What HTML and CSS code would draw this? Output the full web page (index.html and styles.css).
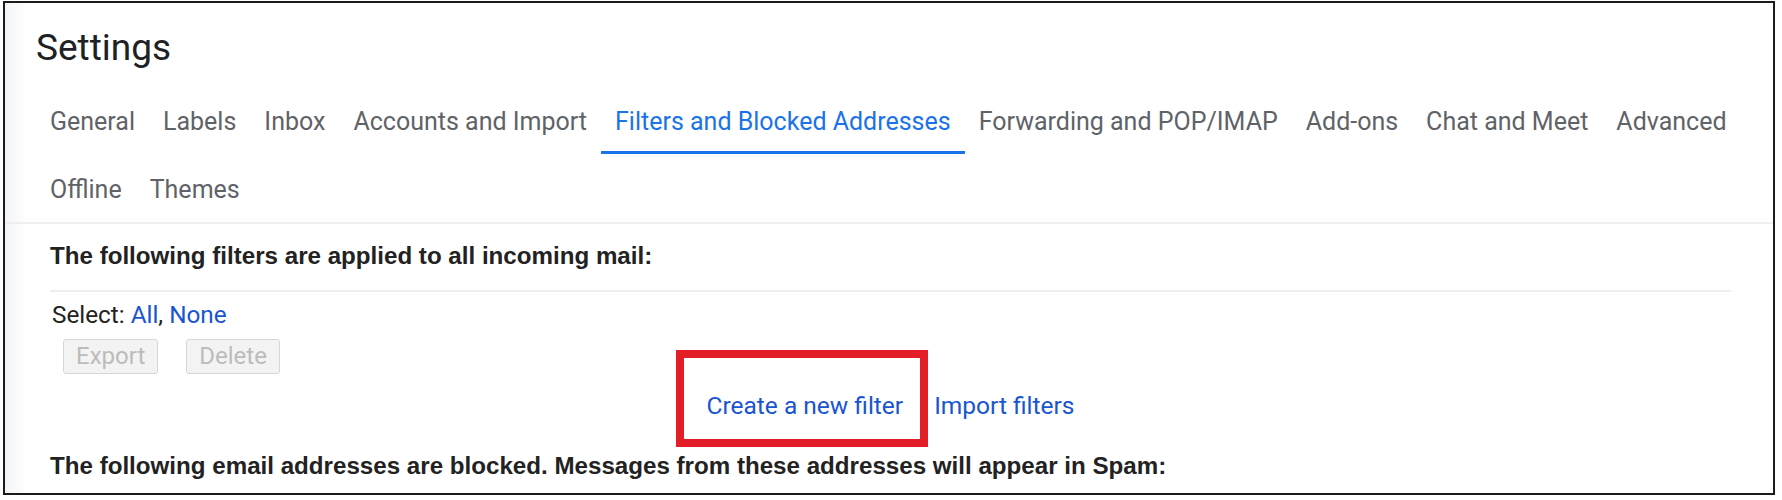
FILE: index.html
```html
<!DOCTYPE html>
<html lang="en">
<head>
<meta charset="utf-8">
<title>Settings - Filters and Blocked Addresses</title>
<link rel="stylesheet" href="styles.css">
</head>
<body>
<div class="frame">
  <h1 class="title">Settings</h1>
  <nav class="tabs">
    <a class="tab">General</a>
    <a class="tab">Labels</a>
    <a class="tab">Inbox</a>
    <a class="tab">Accounts and Import</a>
    <a class="tab active">Filters and Blocked Addresses</a>
    <a class="tab">Forwarding and POP/IMAP</a>
    <a class="tab">Add-ons</a>
    <a class="tab">Chat and Meet</a>
    <a class="tab">Advanced</a>
    <a class="tab">Offline</a>
    <a class="tab">Themes</a>
  </nav>
  <div class="content">
    <div class="section-head ruled">The following filters are applied to all incoming mail:</div>
    <div class="select-row">Select: <a class="link">All</a>, <a class="link">None</a></div>
    <div class="btn-row">
      <button class="btn" disabled>Export</button>
      <button class="btn" disabled>Delete</button>
    </div>
    <div class="links-row">
      <span class="highlight"><a class="link">Create a new filter</a></span>
      <a class="link">Import filters</a>
    </div>
    <div class="section-head second">The following email addresses are blocked. Messages from these addresses will appear in Spam:</div>
  </div>
</div>
</body>
</html>
```

FILE: styles.css
```css
html, body {
  margin: 0;
  padding: 0;
  background: #ffffff;
}

body {
  font-family: Roboto, "Liberation Sans", Arial, sans-serif;
  color: #222222;
}

.frame {
  box-sizing: border-box;
  margin: 1px 7px 0 3px;
  height: 494px;
  border: 2px solid #1c1c1c;
  overflow: hidden;
  background: linear-gradient(to right, #f2f4f7 0, #ffffff 22px);
}

.title {
  margin: 0;
  padding: 21px 0 0 31px;
  font-size: 37px;
  line-height: 48px;
  font-weight: 400;
  color: #202124;
}

.tabs {
  display: flex;
  flex-wrap: wrap;
  margin-top: 14px;
  padding-left: 31px;
  border-bottom: 2px solid #efefef;
}

.tab {
  box-sizing: border-box;
  display: flex;
  align-items: center;
  height: 68px;
  padding: 5px 14px 0;
  font-size: 25px;
  color: #5f6368;
  border-bottom: 3px solid transparent;
  white-space: nowrap;
}

.tab.active {
  color: #1a73e8;
  border-bottom-color: #1a73e8;
}

.content {
  padding: 0 42px 0 45px;
}

.section-head {
  font-family: "Liberation Sans", Arial, sans-serif;
  font-weight: 700;
  font-size: 24.15px;
  line-height: 30px;
  color: #222222;
  white-space: nowrap;
}

.section-head.ruled {
  margin-top: 17px;
  padding-bottom: 19px;
  border-bottom: 2px solid #eeeeee;
}

.section-head.second {
  margin-top: 30px;
}

.select-row {
  margin-top: 8px;
  padding-left: 2px;
  font-size: 24.3px;
  line-height: 30px;
  color: #222222;
}

.link {
  color: #1a55d0;
  cursor: pointer;
}

.btn-row {
  display: flex;
  gap: 28px;
  margin-top: 9px;
  margin-left: 13px;
}

.btn {
  box-sizing: border-box;
  height: 35px;
  padding: 0 12px;
  font-family: Roboto, "Liberation Sans", Arial, sans-serif;
  font-size: 24px;
  line-height: 33px;
  color: #bcbcbc;
  background: #f3f3f3;
  border: 1px solid #d6d6d6;
  border-radius: 3px;
}

.links-row {
  display: flex;
  justify-content: center;
  gap: 31px;
  margin-top: 17px;
  font-size: 24.5px;
  line-height: 30px;
}

.highlight {
  position: relative;
}

.highlight::after {
  content: "";
  position: absolute;
  top: -41px;
  bottom: -26px;
  left: -30px;
  right: -25px;
  border: 8px solid #e41e26;
  pointer-events: none;
}
```
